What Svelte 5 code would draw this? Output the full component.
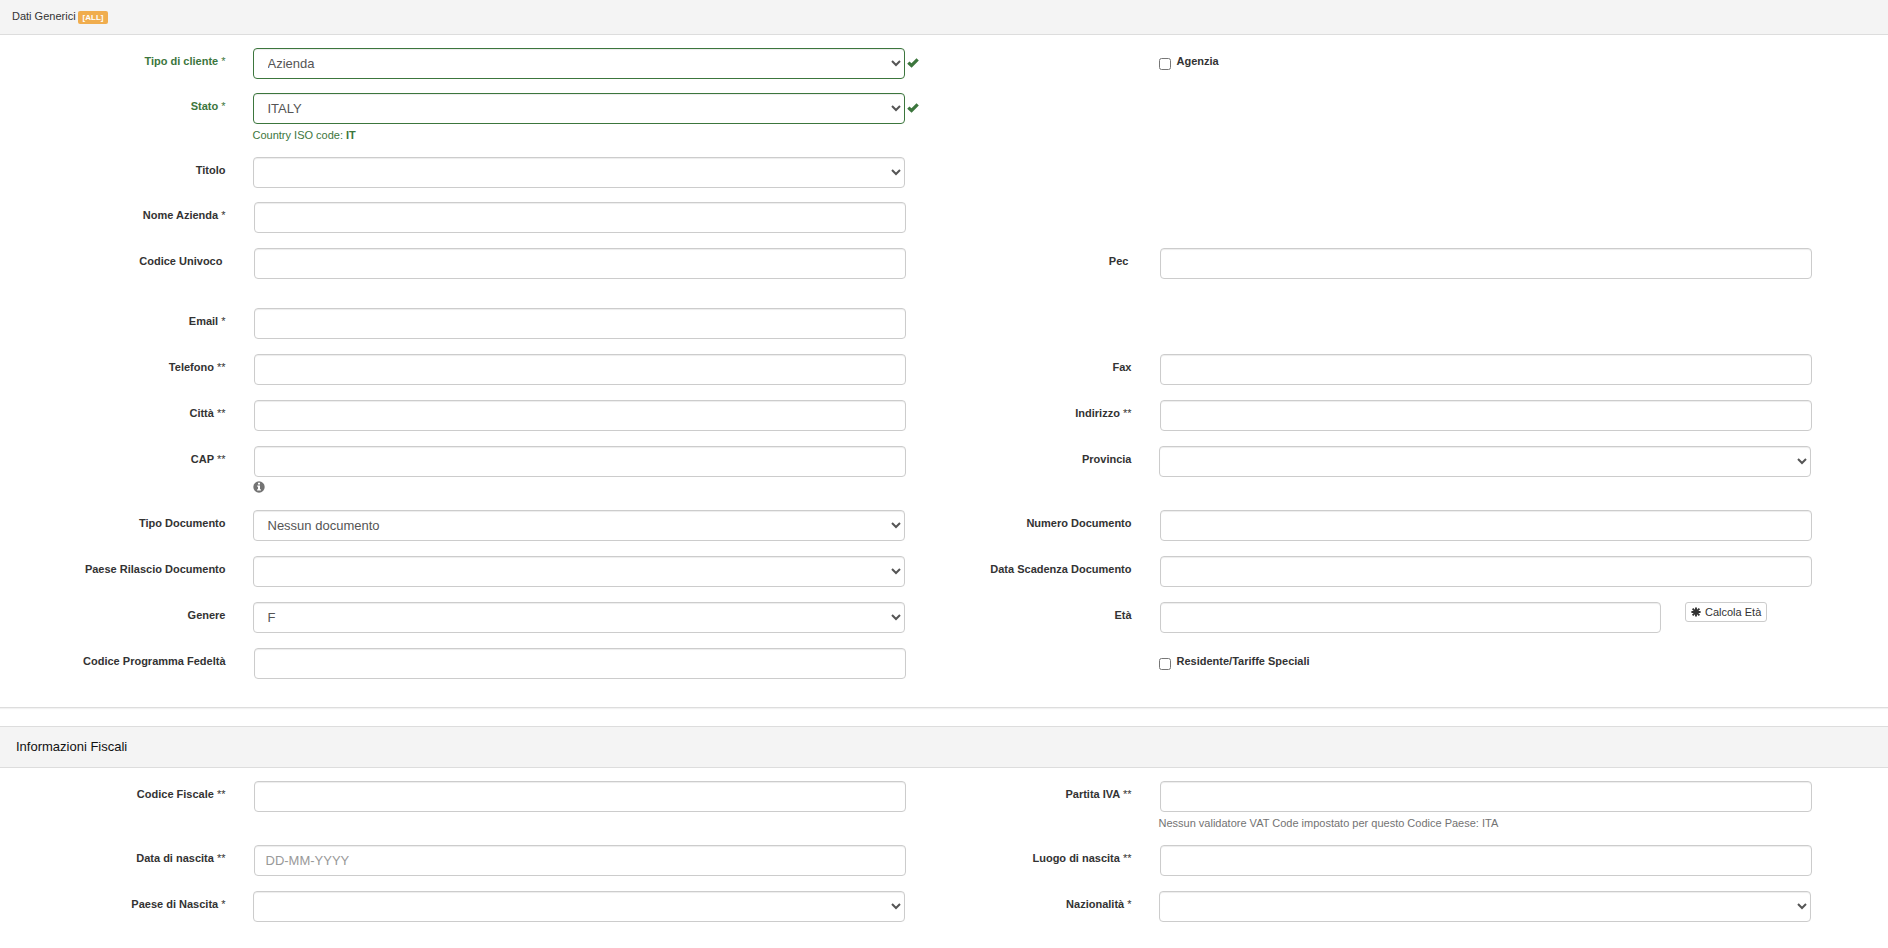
<script>
	// each row holds up to two fields: left half and right half
	let groups = $state([
		[
			[
				{ id: 'tipo', label: 'Tipo di cliente', mark: '*', type: 'select', value: 'Azienda', options: ['Azienda', 'Privato'], valid: true },
				{ id: 'agenzia', label: 'Agenzia', type: 'checkbox', value: false }
			],
			[{ id: 'stato', label: 'Stato', mark: '*', type: 'select', value: 'ITALY', options: ['ITALY'], valid: true, iso: 'IT' }],
			[{ id: 'titolo', label: 'Titolo', type: 'select', value: '', options: [''] }],
			[{ id: 'nome', label: 'Nome Azienda', mark: '*', type: 'text', value: '' }]
		],
		[
			[
				{ id: 'univoco', label: 'Codice Univoco\u00a0', type: 'text', value: '' },
				{ id: 'pec', label: 'Pec\u00a0', type: 'text', value: '' }
			]
		],
		[
			[{ id: 'email', label: 'Email', mark: '*', type: 'text', value: '' }],
			[
				{ id: 'telefono', label: 'Telefono', mark: '**', type: 'text', value: '' },
				{ id: 'fax', label: 'Fax', type: 'text', value: '' }
			],
			[
				{ id: 'citta', label: 'Città', mark: '**', type: 'text', value: '' },
				{ id: 'indirizzo', label: 'Indirizzo', mark: '**', type: 'text', value: '' }
			],
			[
				{ id: 'cap', label: 'CAP', mark: '**', type: 'text', value: '', info: true },
				{ id: 'provincia', label: 'Provincia', type: 'select', value: '', options: [''] }
			],
			[
				{ id: 'tipodoc', label: 'Tipo Documento', type: 'select', value: 'Nessun documento', options: ['Nessun documento'] },
				{ id: 'numdoc', label: 'Numero Documento', type: 'text', value: '' }
			],
			[
				{ id: 'paesedoc', label: 'Paese Rilascio Documento', type: 'select', value: '', options: [''] },
				{ id: 'scadenza', label: 'Data Scadenza Documento', type: 'text', value: '' }
			],
			[
				{ id: 'genere', label: 'Genere', type: 'select', value: 'F', options: ['F', 'M'] },
				{ id: 'eta', label: 'Età', type: 'text', value: '', button: 'Calcola Età' }
			],
			[
				{ id: 'fedelta', label: 'Codice Programma Fedeltà', type: 'text', value: '' },
				{ id: 'residente', label: 'Residente/Tariffe Speciali', type: 'checkbox', value: false }
			]
		]
	]);

	let fiscal = $state([
		[
			[
				{ id: 'cf', label: 'Codice Fiscale', mark: '**', type: 'text', value: '' },
				{ id: 'iva', label: 'Partita IVA', mark: '**', type: 'text', value: '', help: 'Nessun validatore VAT Code impostato per questo Codice Paese: ITA' }
			],
			[
				{ id: 'nascita', label: 'Data di nascita', mark: '**', type: 'text', value: '', placeholder: 'DD-MM-YYYY' },
				{ id: 'luogo', label: 'Luogo di nascita', mark: '**', type: 'text', value: '' }
			],
			[
				{ id: 'paesenascita', label: 'Paese di Nascita', mark: '*', type: 'select', value: '', options: [''] },
				{ id: 'nazionalita', label: 'Nazionalità', mark: '*', type: 'select', value: '', options: [''] }
			]
		]
	]);
</script>

{#snippet fields(list)}
	<div class="panel-body">
		{#each list as group}
			<div class="group">
				{#each group as row}
					<div class="row">
						{#each row as field (field.id)}
							<div class="field" class:valid={field.valid}>
								{#if field.type === 'checkbox'}
									<div class="control check">
										<input type="checkbox" id={field.id} bind:checked={field.value} />
										<label for={field.id}>{field.label}</label>
									</div>
								{:else}
									<label class="name" for={field.id}>
										{field.label}
										{#if field.mark}<span class="mark">{field.mark}</span>{/if}
									</label>
									<div class="control" class:short={field.button}>
										{#if field.type === 'select'}
											<select id={field.id} bind:value={field.value}>
												{#each field.options as option}
													<option value={option}>{option}</option>
												{/each}
											</select>
										{:else}
											<input type="text" id={field.id} placeholder={field.placeholder} bind:value={field.value} />
										{/if}
										{#if field.valid}
											<svg class="ok" viewBox="0 0 12 10" aria-hidden="true">
												<path d="M0.2 5.7 2.4 3.5 4.5 5.3 9.5 0.3 11.8 2.4 4.6 9.7Z" />
											</svg>
										{/if}
										{#if field.iso}
											<p class="help">Country ISO code: <strong>{field.iso}</strong></p>
										{/if}
										{#if field.help}
											<p class="help">{field.help}</p>
										{/if}
										{#if field.info}
											<div class="help info">
												<svg viewBox="0 0 12 12" aria-hidden="true">
													<circle cx="6" cy="6" r="5.7" fill="#737373" />
													<path fill="#fff" d="M5 1.8h2v1.8H5zM4.2 4.6H7v3.6h.9v1.4H4.1V8.2H5V5.8h-.8z" />
												</svg>
											</div>
										{/if}
									</div>
									{#if field.button}
										<div class="action">
											<button type="button">
												<svg viewBox="0 0 10 10" aria-hidden="true">
													<path d="M5 0.4v9.2M0.4 5h9.2M1.6 1.6l6.8 6.8M8.4 1.6 1.6 8.4" stroke="#333" stroke-width="1.9" />
												</svg>
												{field.button}
											</button>
										</div>
									{/if}
								{/if}
							</div>
						{/each}
					</div>
				{/each}
			</div>
		{/each}
	</div>
{/snippet}

<form>
	<section class="panel">
		<header class="small">Dati Generici <span class="badge">[ALL]</span></header>
		{@render fields(groups)}
	</section>

	<section class="panel fiscal">
		<header>Informazioni Fiscali</header>
		{@render fields(fiscal)}
	</section>
</form>

<style>
	:global(body) {
		margin: 0;
		background: #fff;
	}

	form {
		font-family: 'Liberation Sans', Arial, sans-serif;
		font-size: 11px;
		line-height: 16px;
		color: #333;
	}

	.panel {
		border-bottom: 1px solid #ddd;
		box-shadow: 0 1px 1px rgba(0, 0, 0, 0.05);
		margin-bottom: 18px;
	}

	.fiscal {
		border-top: 1px solid #ddd;
		border-bottom: none;
		box-shadow: none;
		margin-bottom: 0;
	}

	header {
		padding: 12px 16px;
		background: #f4f4f4;
		border-bottom: 1px solid #ddd;
		font-size: 13px;
		color: #111;
	}

	header.small {
		display: flex;
		gap: 2px;
		padding: 8px 12px 10px;
		font-size: 11px;
		color: #333;
	}

	.badge {
		align-self: flex-end;
		padding: 0 5px;
		border-radius: 2px;
		background: #f0ad4e;
		color: #fff;
		font-size: 8px;
		font-weight: bold;
		line-height: 13px;
	}

	.panel-body {
		padding: 13px 62px 28px 14px;
	}

	.group {
		display: flex;
		flex-direction: column;
		gap: 15px;
	}

	.group:first-child:not(:last-child) {
		gap: 14px;
		margin-bottom: 15px;
	}

	.group + .group:not(:last-child) {
		margin-bottom: 29px;
	}

	.row {
		display: grid;
		grid-template-columns: 1fr 1fr;
	}

	.field {
		display: grid;
		grid-template-columns: repeat(12, 1fr);
		align-items: start;
	}

	label {
		font-weight: bold;
	}

	.name {
		grid-column: span 3;
		padding: 5px 15px 0 0;
		text-align: right;
	}

	.mark {
		font-weight: normal;
	}

	.control {
		grid-column: span 9;
		position: relative;
		padding: 0 15px 0 12px;
	}

	.control.short {
		grid-column: span 7;
	}

	.check {
		grid-column: 4 / span 9;
		display: flex;
		gap: 6px;
		padding-top: 5px;
	}

	.check input {
		width: 12px;
		height: 12px;
		margin: 5px 0 0;
	}

	select,
	input[type='text'] {
		display: block;
		box-sizing: border-box;
		width: 100%;
		height: 31px;
		padding: 5px 10px;
		border: 1px solid #ccc;
		border-radius: 4px;
		background-color: #fff;
		box-shadow: inset 0 1px 1px rgba(0, 0, 0, 0.075);
		font-family: inherit;
		font-size: 13px;
		color: #555;
	}

	input[type='text'] {
		margin: 0 0 0 1px;
		padding: 5px 11px;
	}

	input::placeholder {
		color: #999;
	}

	.valid {
		color: #3c763d;
	}

	.valid select {
		border-color: #3c763d;
	}

	.ok {
		position: absolute;
		top: 10px;
		right: 1px;
		width: 12px;
		height: 10px;
		fill: #3c763d;
	}

	.help {
		height: 18px;
		margin: 0;
		line-height: 22px;
		color: #737373;
	}

	.valid .help {
		height: 19px;
		color: #3c763d;
	}

	.info svg {
		display: block;
		width: 12px;
		height: 12px;
		padding-top: 4px;
	}

	.action {
		grid-column: span 2;
		padding-left: 10px;
	}

	button {
		display: flex;
		align-items: center;
		gap: 4px;
		height: 20px;
		padding: 0 5px;
		border: 1px solid #ccc;
		border-radius: 3px;
		background: #fff;
		font-family: inherit;
		font-size: 11px;
		color: #333;
		white-space: nowrap;
	}

	button svg {
		width: 10px;
		height: 10px;
	}
</style>
